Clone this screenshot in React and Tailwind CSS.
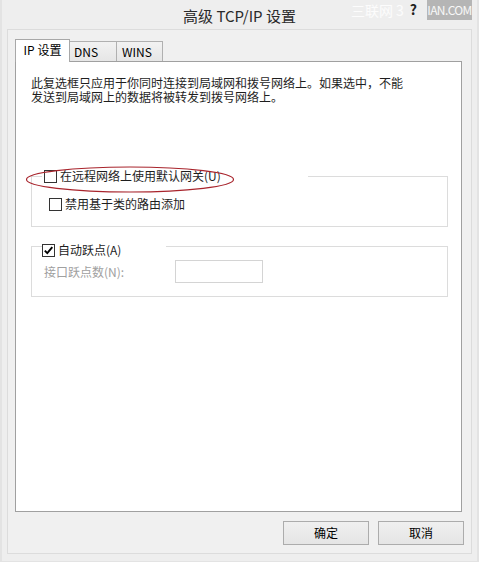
import React from 'react';

const font = "font-['Noto_Sans_CJK_SC','Noto_Sans',sans-serif]";

function CheckBox({ checked = false }) {
  return (
    <span className="flex-shrink-0 w-[13px] h-[13px] border border-[#333] bg-white flex items-center justify-center">
      {checked && (
        <svg width="11" height="11" viewBox="0 0 11 11">
          <path d="M1.8 5.6 L4.3 8.2 L9.3 2.2" fill="none" stroke="#000" strokeWidth="1.9" />
        </svg>
      )}
    </span>
  );
}

function GroupHeader({ top, legendWidth, legendPad = 0, children }) {
  return (
    <div className="flex h-[14px]">
      <div className={`w-[11px] border-t border-l border-[#dcdcdc] ${top}`} />
      <div className="flex items-center gap-[3px]" style={{ width: legendWidth, paddingLeft: legendPad }}>
        {children}
      </div>
      <div className={`flex-1 border-t border-r border-[#dcdcdc] ${top}`} />
    </div>
  );
}

export default function App() {
  return (
    <div className={`relative w-[479px] h-[562px] bg-[#eeeeee] border-x-2 border-b border-[#e3e3e3] text-[#1e1e1e] ${font}`}>
      {/* Title bar */}
      <div className="relative h-[29px] flex items-center justify-center">
        <span className="text-[15px] leading-none text-[#2a2a2a] mt-[1px]">高级 TCP/IP 设置</span>
        {/* watermark + help button */}
        <div className="absolute right-[5px] top-0 flex items-start h-[20px] text-[14px] leading-[20px]">
          <span className="text-white/80 pr-[6px]">三联网 3</span>
          <span className="text-[#222] font-bold leading-[18px] pr-[10px]">?</span>
          <span className="w-[45px] h-[20px] bg-[#b5b5b5] text-white/90 text-[12px] tracking-[-0.6px] text-center">IAN.COM</span>
        </div>
      </div>

      {/* Client frame */}
      <div className="ml-[5px] w-[465px] h-[525px] border border-[#dcdcdc] bg-[#f0f0f0] pt-[9px]">
        {/* Tabs */}
        <div className="flex items-end h-[22px] pl-[7px] text-[12px] text-black">
          <div className="relative z-10 w-[55px] h-[23px] -mb-px bg-white border-x border-t border-[#a8a8a8] flex items-center justify-center pb-[2px]">
            IP 设置
          </div>
          <div className="w-[47px] h-[20px] border-t border-r border-[#b0b0b0] bg-gradient-to-b from-[#f2f2f2] to-[#e6e6e6] flex items-center pl-[4px]">
            DNS
          </div>
          <div className="w-[46px] h-[20px] border-t border-r border-[#b0b0b0] bg-gradient-to-b from-[#f2f2f2] to-[#e6e6e6] flex items-center pl-[5px]">
            WINS
          </div>
        </div>

        {/* Tab panel */}
        <div className="relative ml-[7px] w-[447px] h-[451px] bg-white border border-[#a0a0a0] text-[12px]">
          <div className="pt-[14px] pl-[15px] leading-[14px]">
            <p>此复选框只应用于你同时连接到局域网和拨号网络上。如果选中，不能</p>
            <p>发送到局域网上的数据将被转发到拨号网络上。</p>
          </div>

          {/* Group 1 */}
          <div className="ml-[15px] mt-[65px] w-[417px]">
            <GroupHeader top="mt-[7px]" legendWidth={266} legendPad={2}>
              <CheckBox />
              <span className="leading-[14px]">在远程网络上使用默认网关(U)</span>
            </GroupHeader>
            <div className="border-x border-b border-[#dcdcdc] pt-[14px] pb-[15px] pl-[17px]">
              <div className="flex items-center gap-[3px] h-[14px]">
                <CheckBox />
                <span className="leading-[14px]">禁用基于类的路由添加</span>
              </div>
            </div>
          </div>

          {/* Group 2 */}
          <div className="ml-[15px] mt-[16px] w-[417px]">
            <GroupHeader top="mt-[3px]" legendWidth={124}>
              <CheckBox checked />
              <span className="leading-[14px]">自动跃点(A)</span>
            </GroupHeader>
            <div className="border-x border-b border-[#dcdcdc] pt-[3px] pb-[13px] pl-[12px] flex items-center">
              <span className="w-[131px] text-[#a0a0a0] leading-[14px]">接口跃点数(N):</span>
              <div className="w-[88px] h-[23px] border border-[#d4d4d4] bg-white" />
            </div>
          </div>

          {/* red annotation ellipse */}
          <svg className="absolute left-[8px] top-[103px]" width="212" height="30" viewBox="0 0 212 30">
            <ellipse cx="106" cy="14.5" rx="103.5" ry="12.5" fill="none" stroke="#a8242c" strokeWidth="1.2" />
          </svg>
        </div>

        {/* Buttons */}
        <div className="flex justify-end gap-[9px] pr-[7px] mt-[9px] text-[12px]">
          <button className="w-[86px] h-[24px] border border-[#acacac] bg-gradient-to-b from-[#f0f0f0] to-[#e5e5e5] text-black">确定</button>
          <button className="w-[86px] h-[24px] border border-[#acacac] bg-gradient-to-b from-[#f0f0f0] to-[#e5e5e5] text-black">取消</button>
        </div>
      </div>
    </div>
  );
}
